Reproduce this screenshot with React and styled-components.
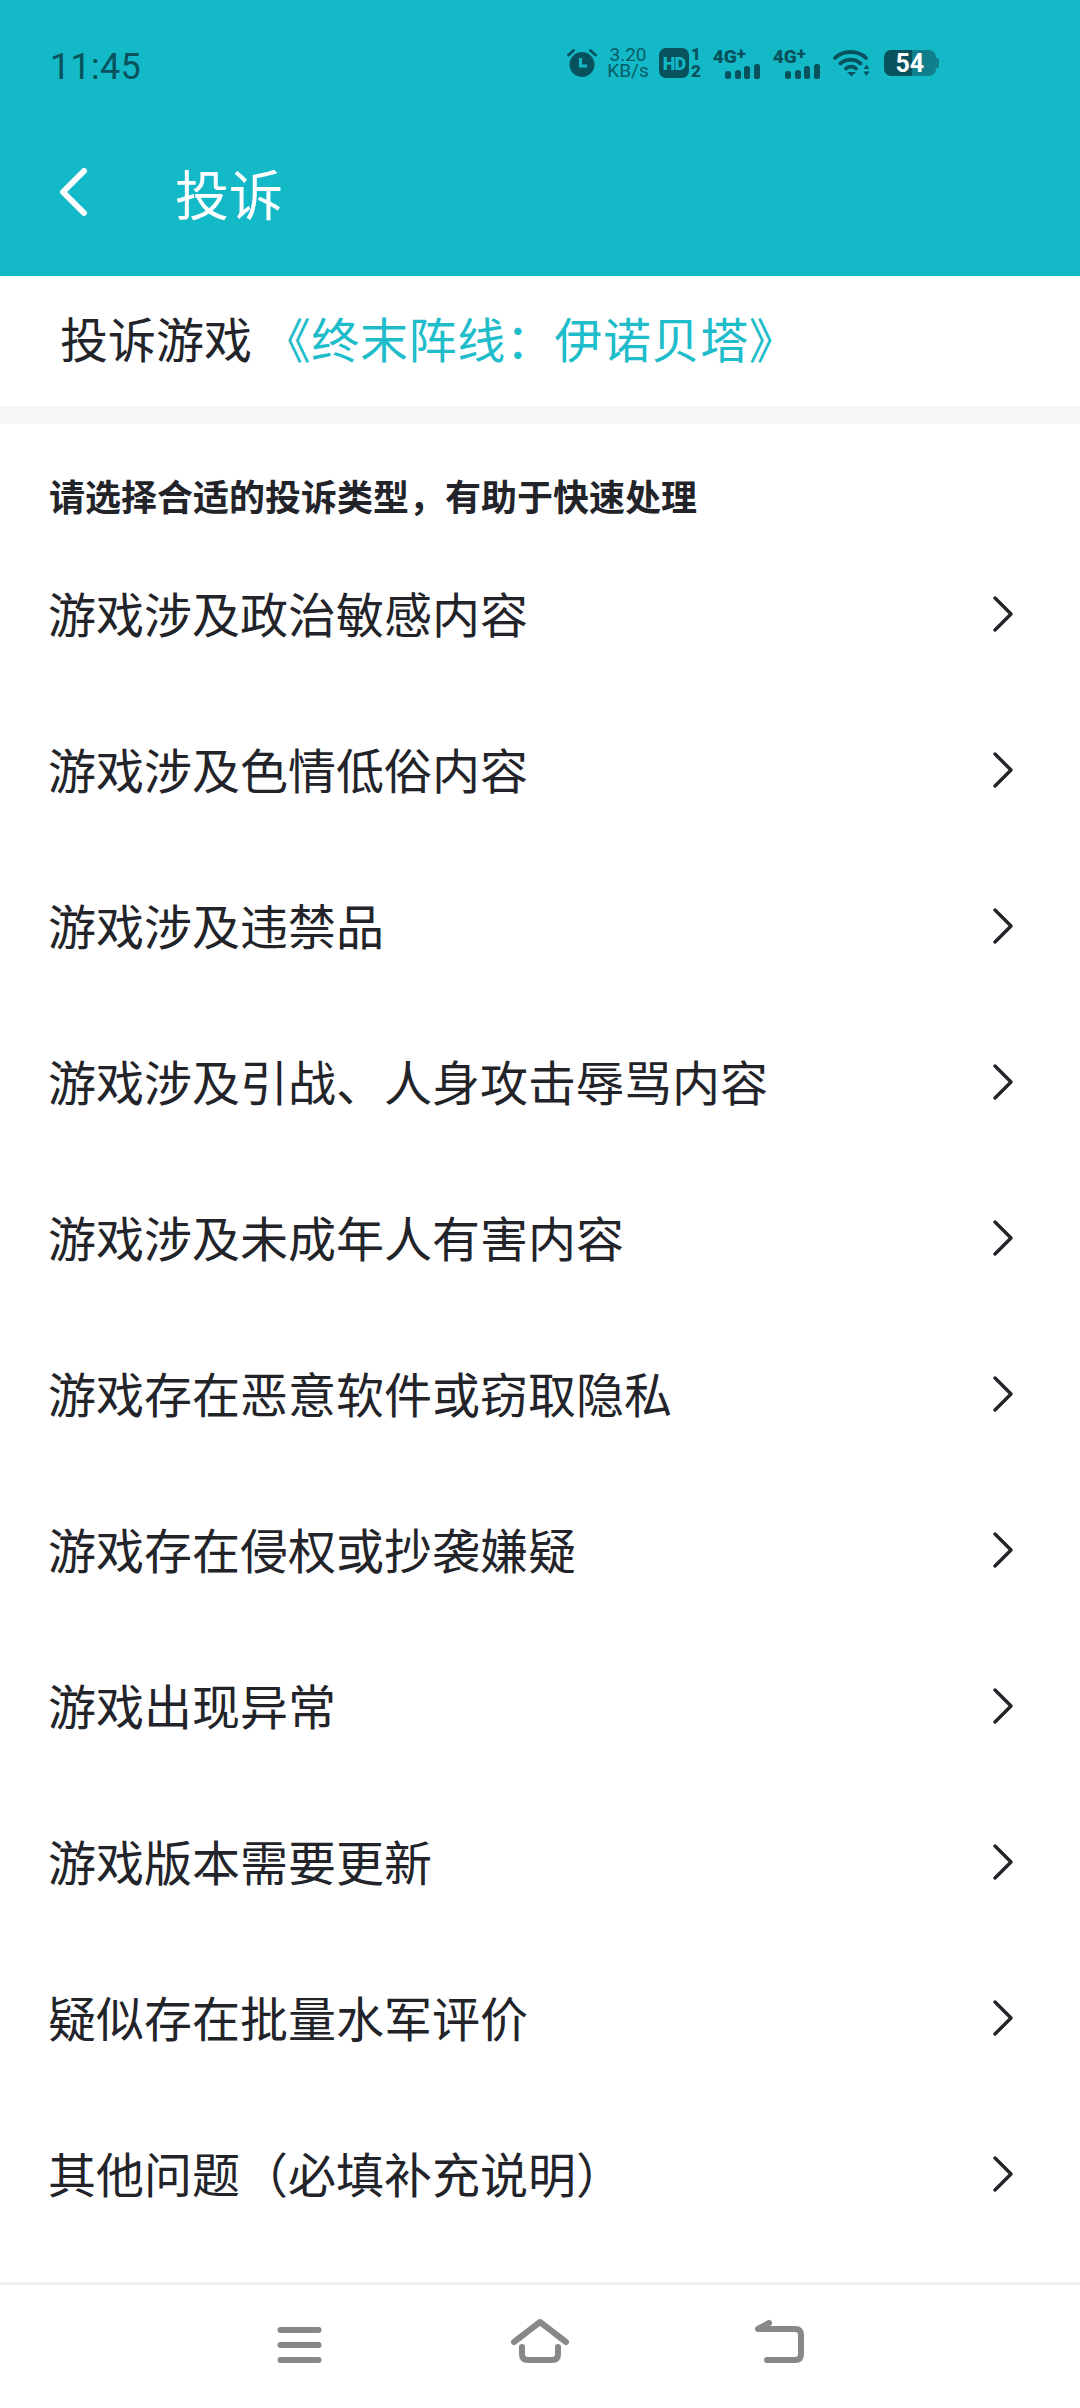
import React from 'react'
import styled, { createGlobalStyle } from 'styled-components'

const GlobalStyle = createGlobalStyle`
  html, body { margin: 0; padding: 0; background: #fff; }
  body { font-family: "Roboto", "Noto Sans CJK SC", sans-serif; }
`

const Page = styled.div`
  width: 1080px;
  height: 2408px;
  display: flex;
  flex-direction: column;
  background: #fff;
  overflow: hidden;
`

const Header = styled.header`
  height: 276px;
  flex: none;
  background: #14b9c8;
  display: flex;
  flex-direction: column;
`

const StatusBar = styled.div`
  height: 64px;
  margin-top: 32px;
  padding: 0 0 0 50px;
  display: flex;
  align-items: center;
  color: #07525c;
`

const Clock = styled.span`
  font-size: 36px;
  width: 517px;
  padding-top: 5px;
  letter-spacing: 0.3px;
`

const StatusIcons = styled.div`
  display: flex;
  align-items: center;
  height: 32px;
  margin-bottom: 2px;
`

const Speed = styled.div`
  width: 42px;
  margin-left: 10px;
  font-size: 19px;
  line-height: 16px;
  text-align: center;
  white-space: nowrap;
  opacity: 0.9;
`

const HdGroup = styled.div`
  margin-left: 10px;
  display: flex;
  align-items: center;
`

const HdBadge = styled.span`
  width: 30px;
  height: 30px;
  border-radius: 7px;
  background: #07525c;
  color: #14b9c8;
  font-size: 18px;
  font-weight: 900;
  display: flex;
  align-items: center;
  justify-content: center;
  letter-spacing: -1px;
`

const SimNums = styled.div`
  margin-left: 2px;
  font-size: 17px;
  font-weight: 900;
  line-height: 17px;
  text-align: center;
`

const Signal = styled.div`
  width: 47px;
  height: 31px;
  margin-left: ${p => p.$gap}px;
  position: relative;
`

const NetLabel = styled.span`
  position: absolute;
  left: 0;
  top: -3px;
  font-size: 19px;
  font-weight: 900;
  white-space: nowrap;
`

const NetPlus = styled.sup`
  font-size: 17px;
  vertical-align: 4px;
  line-height: 0;
`

const Bars = styled.div`
  position: absolute;
  right: 0;
  bottom: 0;
  display: flex;
  align-items: flex-end;
  gap: 3.5px;
`

const Bar = styled.i`
  display: block;
  width: 6px;
  height: ${p => p.$h}px;
  border-radius: 2.5px;
  background: #07525c;
`

const Wifi = styled.svg`
  width: 37px;
  height: 28px;
  margin-left: 13px;
`

const Battery = styled.div`
  margin-left: 14px;
  width: 52px;
  height: 26px;
  border-radius: 7px;
  background: linear-gradient(90deg, #07525c 0 54%, #0f7f8c 54% 100%);
  color: #fff;
  font-size: 25px;
  font-weight: 700;
  display: flex;
  align-items: center;
  justify-content: center;
  position: relative;
  &::after {
    content: '';
    position: absolute;
    right: -3px;
    top: 8px;
    width: 3px;
    height: 10px;
    border-radius: 0 2px 2px 0;
    background: #0f7f8c;
  }
`

const TitleBar = styled.div`
  flex: 1;
  display: flex;
  align-items: center;
  padding: 12px 0 0 56px;
  color: #fff;
`

const BackBtn = styled.svg`
  width: 32px;
  height: 52px;
  margin-right: 87px;
`

const PageTitle = styled.h1`
  margin: 0;
  font-size: 54px;
  font-weight: 400;
  font-family: "Noto Sans CJK SC", sans-serif;
`

const GameRow = styled.div`
  height: 130px;
  flex: none;
  box-sizing: border-box;
  padding: 0 0 8px 60px;
  display: flex;
  align-items: center;
  font-size: 48px;
  color: #22242a;
  font-family: "Noto Sans CJK SC", sans-serif;
  white-space: nowrap;
`

const GameName = styled.span`
  color: #1fbcca;
  letter-spacing: 0.6px;
`

const Band = styled.div`
  height: 18px;
  flex: none;
  background: #f5f6f7;
`

const SectionHead = styled.h2`
  margin: 0;
  height: 112px;
  padding: 46px 0 0 49px;
  box-sizing: border-box;
  font-size: 36px;
  line-height: 50px;
  font-weight: 700;
  color: #22242a;
  font-family: "Noto Sans CJK SC", sans-serif;
`

const List = styled.ul`
  margin: 0;
  padding: 0;
  list-style: none;
  flex: 1;
`

const Row = styled.li`
  height: 156px;
  box-sizing: border-box;
  padding: 0 65px 0 48px;
  display: flex;
  align-items: center;
  justify-content: space-between;
  font-size: 48px;
  color: #22242a;
  font-family: "Noto Sans CJK SC", sans-serif;
`

const RowLabel = styled.span`
  margin-bottom: 5px;
`

const Chevron = styled.svg`
  width: 24px;
  height: 36px;
`

const NavBar = styled.nav`
  height: 126px;
  flex: none;
  border-top: 3px solid #eeeeee;
  box-sizing: border-box;
  display: flex;
  align-items: flex-start;
  padding: 33px 0 0 277px;
`

const NavIcon = styled.svg`
  width: ${p => p.$w}px;
  height: 46px;
  margin-right: ${p => p.$mr}px;
  flex: none;
`

const items = [
  '游戏涉及政治敏感内容',
  '游戏涉及色情低俗内容',
  '游戏涉及违禁品',
  '游戏涉及引战、人身攻击辱骂内容',
  '游戏涉及未成年人有害内容',
  '游戏存在恶意软件或窃取隐私',
  '游戏存在侵权或抄袭嫌疑',
  '游戏出现异常',
  '游戏版本需要更新',
  '疑似存在批量水军评价',
  '其他问题（必填补充说明）',
]

const AlarmIcon = () => (
  <svg width="30" height="30" viewBox="0 0 30 30">
    <circle cx="15" cy="16.5" r="12.5" fill="#07525c" />
    <path d="M1.5 7 L6.5 2.5 M28.5 7 L23.5 2.5" stroke="#07525c" strokeWidth="2.8" strokeLinecap="round" />
    <path d="M13.5 10 V18 H20" stroke="#14b9c8" strokeWidth="3" fill="none" />
  </svg>
)

const WifiIcon = () => (
  <Wifi viewBox="0 0 37 28">
    <path d="M2 9 C10 1 25 1 33 9 M7.5 14.5 C13 9.5 22 9.5 27.5 14.5 M13 19.5 C15.5 17 20.5 17 23 19.5" stroke="#07525c" strokeWidth="3.8" fill="none" strokeLinecap="round" />
    <path d="M14 23 H23 L18.5 27.5 Z" fill="#07525c" />
    <path d="M30.5 20 L33.5 15.5 L36.5 20 Z M30.5 22.5 H36.5 L33.5 27 Z" fill="#07525c" />
  </Wifi>
)

const SignalBlock = ({ gap }) => (
  <Signal $gap={gap}>
    <NetLabel>4G<NetPlus>+</NetPlus></NetLabel>
    <Bars>
      <Bar $h={8} />
      <Bar $h={9} />
      <Bar $h={13} />
      <Bar $h={15} />
    </Bars>
  </Signal>
)

export default function App() {
  return (
    <Page>
      <GlobalStyle />
      <Header>
        <StatusBar>
          <Clock>11:45</Clock>
          <StatusIcons>
            <AlarmIcon />
            <Speed>3.20<br />KB/s</Speed>
            <HdGroup>
              <HdBadge>HD</HdBadge>
              <SimNums>1<br />2</SimNums>
            </HdGroup>
            <SignalBlock gap={12} />
            <SignalBlock gap={13} />
            <WifiIcon />
            <Battery>54</Battery>
          </StatusIcons>
        </StatusBar>
        <TitleBar>
          <BackBtn viewBox="0 0 32 52">
            <path d="M28 5 L7 26 L28 47" stroke="#fff" strokeWidth="6" fill="none" strokeLinecap="round" strokeLinejoin="round" />
          </BackBtn>
          <PageTitle>投诉</PageTitle>
        </TitleBar>
      </Header>
      <GameRow>投诉游戏&nbsp;<GameName>《终末阵线：伊诺贝塔》</GameName></GameRow>
      <Band />
      <SectionHead>请选择合适的投诉类型，有助于快速处理</SectionHead>
      <List>
        {items.map(t => (
          <Row key={t}>
            <RowLabel>{t}</RowLabel>
            <Chevron viewBox="0 0 24 36">
              <path d="M4 2 L20 18 L4 34" stroke="#22242a" strokeWidth="3.4" fill="none" strokeLinecap="round" strokeLinejoin="round" />
            </Chevron>
          </Row>
        ))}
      </List>
      <NavBar>
        <NavIcon $w={45} $mr={189} viewBox="0 0 45 46">
          <path d="M3.5 12 H41.5 M3.5 27 H41.5 M3.5 42 H41.5" stroke="#888" strokeWidth="6" strokeLinecap="round" />
        </NavIcon>
        <NavIcon $w={58} $mr={186} viewBox="0 0 58 46">
          <path d="M3 24 L29 4 L55 24 M11 29 V36 Q11 42 17 42 H41 Q47 42 47 36 V29" stroke="#888" strokeWidth="6" fill="none" strokeLinecap="round" strokeLinejoin="round" />
        </NavIcon>
        <NavIcon $w={50} $mr={0} viewBox="0 0 50 46">
          <path d="M14 5 L3 11 H40 Q46 11 46 17 V36 Q46 42 40 42 H12" stroke="#888" strokeWidth="6" fill="none" strokeLinecap="round" strokeLinejoin="round" />
        </NavIcon>
      </NavBar>
    </Page>
  )
}
